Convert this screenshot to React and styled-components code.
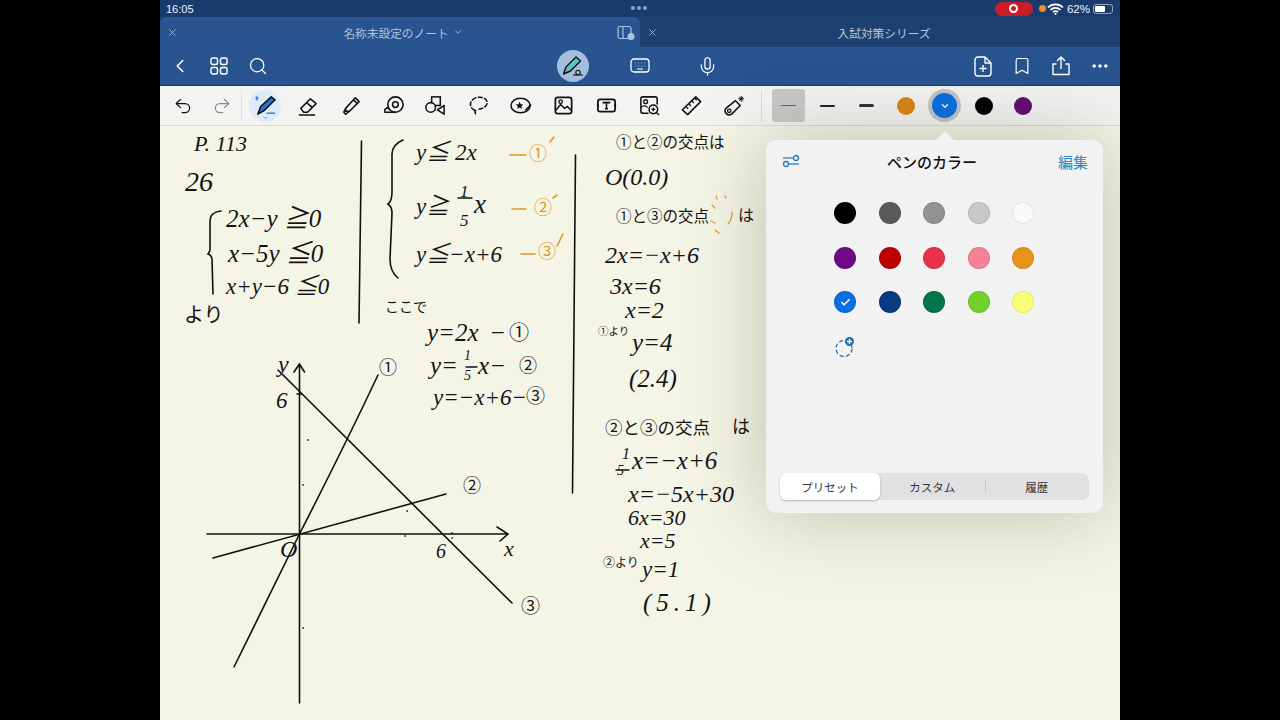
import React from 'react';
import styled, { createGlobalStyle } from 'styled-components';
import { ChevronLeft, Search, Mic, Bookmark, MoreHorizontal, Undo2, Redo2, ChevronDown, X, Check } from 'lucide-react';

const GlobalStyle = createGlobalStyle`
  * { box-sizing: border-box; }
  html, body { margin: 0; padding: 0; background: #000; }
  body { font-family: "Noto Sans CJK JP", "Liberation Sans", sans-serif; }
`;

const INK = [
  { x: 194, y: 133, s: 22, t: 'P. 113' },
  { x: 185, y: 168, s: 28, t: '26' },
  { x: 226, y: 206, s: 25, t: '2x−y ≧0' },
  { x: 228, y: 241, s: 25, t: 'x−5y ≦0' },
  { x: 226, y: 275, s: 23, t: 'x+y−6 ≦0' },
  { x: 184, y: 304, s: 20, t: 'より', jp: true },
  { x: 416, y: 141, s: 23, t: 'y≦ 2x' },
  { x: 416, y: 195, s: 23, t: 'y≧' },
  { x: 460, y: 183, s: 17, t: '1' },
  { x: 460, y: 212, s: 17, t: '5' },
  { x: 474, y: 191, s: 27, t: 'x' },
  { x: 416, y: 243, s: 23, t: 'y≦−x+6' },
  { x: 385, y: 299, s: 14, t: 'ここで', jp: true },
  { x: 427, y: 320, s: 25, t: 'y=2x' },
  { x: 489, y: 320, s: 25, t: '−' },
  { x: 509, y: 322, s: 20, t: '①', jp: true },
  { x: 430, y: 353, s: 25, t: 'y=' },
  { x: 464, y: 349, s: 14, t: '1' },
  { x: 464, y: 369, s: 14, t: '5' },
  { x: 478, y: 353, s: 25, t: 'x−' },
  { x: 519, y: 355, s: 18, t: '②', jp: true },
  { x: 433, y: 386, s: 23, t: 'y=−x+6−' },
  { x: 526, y: 385, s: 19, t: '③', jp: true },
  { x: 616, y: 134, s: 15.5, t: '①と②の交点は', jp: true },
  { x: 605, y: 165, s: 24, t: 'O(0.0)' },
  { x: 616, y: 208, s: 15.5, t: '①と③の交点', jp: true },
  { x: 738, y: 206, s: 16, t: 'は', jp: true },
  { x: 605, y: 243, s: 24, t: '2x=−x+6' },
  { x: 610, y: 274, s: 24, t: '3x=6' },
  { x: 625, y: 298, s: 24, t: 'x=2' },
  { x: 598, y: 326, s: 10.5, t: '①より', jp: true },
  { x: 632, y: 330, s: 25, t: 'y=4' },
  { x: 629, y: 366, s: 25, t: '(2.4)' },
  { x: 605, y: 418, s: 17.5, t: '②と③の交点', jp: true },
  { x: 732, y: 416, s: 18, t: 'は', jp: true },
  { x: 622, y: 446, s: 16, t: '1' },
  { x: 617, y: 464, s: 14, t: '5' },
  { x: 632, y: 448, s: 25, t: 'x=−x+6' },
  { x: 628, y: 482, s: 24, t: 'x=−5x+30' },
  { x: 628, y: 507, s: 22, t: '6x=30' },
  { x: 640, y: 530, s: 22, t: 'x=5' },
  { x: 603, y: 556, s: 12, t: '②より', jp: true },
  { x: 642, y: 558, s: 23, t: 'y=1' },
  { x: 643, y: 590, s: 25, t: '(5.1)', wide: true },
  { x: 379, y: 357, s: 18, t: '①', jp: true },
  { x: 463, y: 475, s: 18, t: '②', jp: true },
  { x: 521, y: 595, s: 19, t: '③', jp: true },
  { x: 278, y: 352, s: 24, t: 'y' },
  { x: 276, y: 389, s: 23, t: '6' },
  { x: 280, y: 537, s: 24, t: 'O' },
  { x: 504, y: 538, s: 22, t: 'x' },
  { x: 436, y: 541, s: 20, t: '6' },
  { x: 529, y: 143, s: 18, t: '①', jp: true, c: '#dd9a1f' },
  { x: 534, y: 197, s: 18, t: '②', jp: true, c: '#dd9a1f' },
  { x: 538, y: 241, s: 18, t: '③', jp: true, c: '#dd9a1f' },
];

const DOTS = [[308, 440], [303, 485], [407, 511], [405, 536], [452, 533], [452, 538], [303, 628]];

const SWATCHES = [
  ['#000000', '#5a5a5a', '#929292', '#c8c8c8', '#fafafa'],
  ['#6e0a86', '#bb0000', '#e8324c', '#f58296', '#e8921c'],
  ['#0a6fe0', '#083a80', '#04744a', '#74d02c', '#faff78'],
];

const TOOLS = [
  <><path d="M4 21l3-8L18 3l4 3-11 11-7 4z" fill="#2d6fd0" stroke="#111" strokeWidth="1.6" strokeLinejoin="round" /><path d="M13 20h9" stroke="#2d6fd0" strokeWidth="1.4" /><path d="M3 2v5M1.500 3.500l3 2M1.500 5.500l3-2" stroke="#2d6fd0" strokeWidth="1" /><path d="M10 24l2 1.500 2-1.500" fill="none" stroke="#6d8fb8" strokeWidth="1" /></>,
  <><path d="M5 15L15 5l6 5-9 9H8z" fill="none" stroke="#111" strokeWidth="1.6" strokeLinejoin="round" /><path d="M11 9l6 5M3 22h17" stroke="#111" strokeWidth="1.6" /></>,
  <><path d="M7 15L17 4l4 4-10 10-4 0zM7 15l-2 4 2 2 4-3M15 6l4 4" fill="none" stroke="#111" strokeWidth="1.6" strokeLinejoin="round" /></>,
  <><circle cx="14" cy="11" r="8" fill="none" stroke="#111" strokeWidth="1.6" /><circle cx="14" cy="11" r="3" fill="none" stroke="#111" strokeWidth="1.6" /><path d="M14 19H3v-3l3-2 1 2" fill="none" stroke="#111" strokeWidth="1.6" strokeLinejoin="round" /></>,
  <><rect x="8" y="3" width="9" height="9" fill="none" stroke="#111" strokeWidth="1.6" /><circle cx="7" cy="14" r="5" fill="#f2f2f2" stroke="#111" strokeWidth="1.6" /><path d="M21 12v9l-7-4.5z" fill="#f2f2f2" stroke="#111" strokeWidth="1.6" strokeLinejoin="round" /></>,
  <><path d="M8 17C2 14 2 7 9 4c6-2 13 1 12 6-1 4-6 6-11 6M9 17c-2 2 0 3 1 5" fill="none" stroke="#111" strokeWidth="1.6" strokeDasharray="4 2.6" strokeLinecap="round" /></>,
  <><ellipse cx="11" cy="12" rx="10" ry="7.500" fill="none" stroke="#111" strokeWidth="1.600" /><path d="M10 8l1.200 2.600 2.800.3-2.100 1.900.6 2.800-2.500-1.400-2.500 1.400.6-2.800L6 10.900l2.800-.3z" fill="#111" /><path d="M16 17l6-6" stroke="#111" strokeWidth="1.600" /></>,
  <><rect x="3.500" y="3.500" width="17" height="17" rx="2.500" fill="none" stroke="#111" strokeWidth="1.800" /><path d="M4 17l5-6 4 4 3-2 4 4" fill="none" stroke="#111" strokeWidth="1.600" /><circle cx="9" cy="8" r="1.800" fill="none" stroke="#111" strokeWidth="1.400" /></>,
  <><rect x="3" y="5.500" width="18" height="13" rx="2.500" fill="none" stroke="#111" strokeWidth="1.800" /><path d="M8 9h8M12 9v6.500M10.500 15.500h3" fill="none" stroke="#111" strokeWidth="1.600" /><path d="M2 12h2M20 12h2" stroke="#111" strokeWidth="2.400" /></>,
  <><path d="M11 20H5a2 2 0 0 1-2-2V5a2 2 0 0 1 2-2h13a2 2 0 0 1 2 2v6" fill="none" stroke="#111" strokeWidth="1.600" /><circle cx="8" cy="8" r="2" fill="none" stroke="#111" strokeWidth="1.400" /><path d="M3 14c2-2 5-2 7 0" fill="none" stroke="#111" strokeWidth="1.400" /><circle cx="16" cy="16" r="4.500" fill="none" stroke="#111" strokeWidth="1.600" /><path d="M14 16h4M16 14v4M19.500 19.500l2.500 2.500" stroke="#111" strokeWidth="1.400" /></>,
  <><path d="M2.500 16.500L16.500 3l5 5L8 21.500z" fill="none" stroke="#111" strokeWidth="1.600" strokeLinejoin="round" /><path d="M6.500 13.500l2 2M9.500 10.500l2 2M12.500 7.500l2 2M15.500 4.500l2 2" stroke="#111" strokeWidth="1.300" /></>,
  <><path d="M3 15L13 7l5 5-9 9c-2 1.500-4 1-5.500-.5S1.500 17 3 15z" fill="none" stroke="#111" strokeWidth="1.600" strokeLinejoin="round" /><circle cx="6.500" cy="17.500" r="1.800" fill="none" stroke="#111" strokeWidth="1.400" /><path d="M19 2v6M16 5h6M17 3l4 4M21 3l-4 4" stroke="#111" strokeWidth="1" /></>,
];

const App = () => (
  <Screen>
    <GlobalStyle />
    <StatusBar>
      <span>16:05</span>
      <StatusDots><i /><i /><i /></StatusDots>
      <StatusRight>
        <RecordPill><RecordDot /></RecordPill>
        <OrangeDot />
        <svg width="17" height="12" viewBox="0 0 17 12"><path d="M1 4.500a10.500 10.500 0 0 1 15 0M3.500 7a7 7 0 0 1 10 0M6 9.200a3.500 3.500 0 0 1 5 0" fill="none" stroke="#fff" strokeWidth="1.700" /><circle cx="8.500" cy="10.800" r="1.100" fill="#fff" /></svg>
        <span>62%</span>
        <Battery><BatteryFill $level={62} /></Battery>
      </StatusRight>
    </StatusBar>

    <TabRow>
      <Tab $active>
        <TabClose><X size={11} /></TabClose>
        <TabTitle $active>名称未設定のノート <ChevronDown size={10} /></TabTitle>
        <SplitIcon width="19" height="16" viewBox="0 0 19 16">
          <rect x="1" y="1.500" width="13" height="12" rx="2" fill="none" stroke="#a9c3e2" strokeWidth="1.200" />
          <path d="M6 1.500v12" stroke="#a9c3e2" strokeWidth="1.200" />
          <circle cx="14" cy="11.500" r="3.500" fill="#a9c3e2" />
        </SplitIcon>
      </Tab>
      <Tab>
        <TabClose><X size={11} /></TabClose>
        <TabTitle>入試対策シリーズ</TabTitle>
      </Tab>
    </TabRow>

    <NavBar>
      <NavGroup>
        <NavButton><ChevronLeft size={22} strokeWidth={1.7} /></NavButton>
        <NavButton>
          <svg width="18" height="18" viewBox="0 0 18 18" fill="none" stroke="#fff" strokeWidth="1.400">
            <rect x="1" y="1" width="6.500" height="6.500" rx="1.800" /><rect x="10.500" y="1" width="6.500" height="6.500" rx="1.800" />
            <rect x="1" y="10.500" width="6.500" height="6.500" rx="1.800" /><rect x="10.500" y="10.500" width="6.500" height="6.500" rx="1.800" />
          </svg>
        </NavButton>
        <NavButton><Search size={20} strokeWidth={1.5} /></NavButton>
      </NavGroup>
      <NavCenter>
        <PenBadge>
          <svg width="22" height="22" viewBox="0 0 22 22">
            <path d="M1.500 19l2.500-7L14 2l4.500 4-10 10z" fill="#58c4c0" stroke="#111" strokeWidth="1.400" strokeLinejoin="round" />
            <path d="M11 20h10" stroke="#111" strokeWidth="1.100" /><circle cx="16" cy="17.500" r="2.200" fill="none" stroke="#111" strokeWidth="1.100" />
          </svg>
        </PenBadge>
        <NavButton>
          <svg width="20" height="18" viewBox="0 0 20 18" fill="none" stroke="#fff" strokeWidth="1.300">
            <rect x="1" y="2" width="18" height="13" rx="3" />
            <path d="M5 6h.5M8 6h.5M11 6h.5M14 6h.5M5 9h.5M8 9h.5M11 9h.5M14 9h.5M7 12h6" strokeWidth="1.200" />
          </svg>
        </NavButton>
        <NavButton><Mic size={21} strokeWidth={1.4} /></NavButton>
      </NavCenter>
      <NavGroup $end>
        <NavButton>
          <svg width="18" height="21" viewBox="0 0 18 21" fill="none" stroke="#fff" strokeWidth="1.400">
            <path d="M11 1H4a3 3 0 0 0-3 3v13a3 3 0 0 0 3 3h10a3 3 0 0 0 3-3V7zM11 1v6h6M9 9v7M5.500 12.500h7" strokeLinejoin="round" />
          </svg>
        </NavButton>
        <NavButton><Bookmark size={20} strokeWidth={1.4} /></NavButton>
        <NavButton>
          <svg width="20" height="20" viewBox="0 0 20 20" fill="none" stroke="#fff" strokeWidth="1.400">
            <path d="M10 13V1.500M6 5l4-4 4 4M5.500 8H2v10.500h16V8h-3.500" strokeLinejoin="round" />
          </svg>
        </NavButton>
        <NavButton><MoreHorizontal size={20} strokeWidth={2.2} /></NavButton>
      </NavGroup>
    </NavBar>

    <ToolBar>
      <UndoGroup>
        <ToolSlot><Undo2 size={20} strokeWidth={1.5} color="#111" /></ToolSlot>
        <ToolSlot><Redo2 size={20} strokeWidth={1.5} color="#8a8a8a" /></ToolSlot>
      </UndoGroup>
      <ToolGroup>
        {TOOLS.map((icon, i) => (
          <ToolSlot key={i} $active={i === 0}>
            <svg width="23" height="23" viewBox="0 0 24 24" overflow="visible">{icon}</svg>
          </ToolSlot>
        ))}
      </ToolGroup>
      <SwatchGroup>
        <LineSlot $active><LineSample $h={1} $c="#666" /></LineSlot>
        <LineSlot><LineSample $h={2} $c="#222" /></LineSlot>
        <LineSlot><LineSample $h={3} $c="#333" /></LineSlot>
        <LineSlot><ToolDot $c="#dc8414" /></LineSlot>
        <LineSlot>
          <ActiveDot><ChevronDown size={10} strokeWidth={3} color="#fff" /></ActiveDot>
        </LineSlot>
        <LineSlot><ToolDot $c="#000" /></LineSlot>
        <LineSlot><ToolDot $c="#640a78" /></LineSlot>
      </SwatchGroup>
    </ToolBar>

    <Canvas>
      {INK.map((n, i) => (
        <Ink key={i} $x={n.x} $y={n.y - 126} $s={n.s} $c={n.c} $jp={n.jp} $wide={n.wide}>{n.t}</Ink>
      ))}
      <Strokes viewBox="0 126 960 594" width="960" height="594">
        <g transform="translate(-160 0)" fill="none" stroke="#111" strokeWidth="1.600" strokeLinecap="round">
          <path d="M361.500 141L359 323" />
          <path d="M575.500 155L572.500 493" />
          <path d="M221 211c-8 1-11 4-11 10l0 28c0 3-1 4-2 5 3 1 4 3 4 6l1 34" />
          <path d="M403 140c-7 3-11 7-11 14l0 38c0 6-1 10-4 12 3 2 4 4 4 9l-2 46c0 8 3 15 8 19" />
          <path d="M299.500 365L299.500 703M294 372l5.500-8 5 8" />
          <path d="M207 534L508 534M497 527l11 7-8 7" />
          <path d="M234 667L300 533Q345 445 378 375" />
          <path d="M213 558L446 494" />
          <path d="M278 370L512 603" />
          <path d="M297 394h5" />
          <path d="M458 198h14M616 470h13M466 367h11" strokeWidth="1.300" />
          {DOTS.map(([x, y]) => <circle key={`${x}-${y}`} cx={x} cy={y} r=".3" strokeWidth="1" />)}
          <g stroke="#dd9a1f">
            <path d="M510 155h16M550 142l4-5M512 209h14M553 198l4-3M521 254h14M557 246l6-12" />
            <path d="M716 196l1 3M725 196l1 2M712 205l3 3M732 212c0 5-1 9-4 12M711 221l4 2M715 230l4 3" strokeWidth="1.200" />
          </g>
        </g>
      </Strokes>

      <Popover>
        <PopoverHead>
          <svg width="18" height="14" viewBox="0 0 18 14" fill="none" stroke="#2a7ab8" strokeWidth="1.300">
            <path d="M1 4h10" /><circle cx="14" cy="4" r="2.500" /><circle cx="4" cy="10" r="2.500" /><path d="M6.500 10H17" />
          </svg>
          <PopoverTitle>ペンのカラー</PopoverTitle>
          <EditLink>編集</EditLink>
        </PopoverHead>
        <Palette>
          {SWATCHES.flat().map((c, i) => (
            <Swatch key={c} $c={c}>{i === 10 && <Check size={11} strokeWidth={3.500} color="#fff" />}</Swatch>
          ))}
          <AddColor>
            <svg width="22" height="22" viewBox="0 0 22 22">
              <circle cx="10" cy="12.500" r="8" fill="none" stroke="#1c72b0" strokeWidth="1.300" strokeDasharray="4 2.500" />
              <circle cx="15.500" cy="5.500" r="4.500" fill="#1c72b0" />
              <path d="M13 5.500h5M15.500 3v5" stroke="#fff" strokeWidth="1.400" />
            </svg>
          </AddColor>
        </Palette>
        <Segments>
          <Segment $selected>プリセット</Segment>
          <Segment>カスタム</Segment>
          <Segment $divided>履歴</Segment>
        </Segments>
      </Popover>
    </Canvas>
  </Screen>
);

const Screen = styled.div`
  width: 960px;
  height: 720px;
  margin: 0 auto;
  overflow: hidden;
  display: flex;
  flex-direction: column;
  background: #f5f5e7;
`;

const StatusBar = styled.div`
  height: 17px;
  flex: none;
  display: flex;
  align-items: center;
  justify-content: space-between;
  padding: 0 7px 0 6px;
  position: relative;
  background: #1c3b6d;
  color: #f2f5fa;
  font: 11px "Liberation Sans", sans-serif;
`;

const StatusDots = styled.div`
  position: absolute;
  left: 471px;
  top: 6px;
  display: flex;
  gap: 2px;
  i {
    width: 4px;
    height: 4px;
    border-radius: 50%;
    background: #8fa6c6;
  }
`;

const StatusRight = styled.div`
  display: flex;
  align-items: center;
  gap: 3px;
  font-size: 11.500px;
`;

const RecordPill = styled.div`
  width: 38px;
  height: 14px;
  border-radius: 7px;
  background: #c81e28;
  display: flex;
  align-items: center;
  justify-content: center;
  margin-right: 3.500px;
`;

const RecordDot = styled.div`
  width: 9px;
  height: 9px;
  border-radius: 50%;
  background: #c81e28;
  border: 2px solid #fff;
`;

const OrangeDot = styled.div`
  width: 7px;
  height: 7px;
  border-radius: 50%;
  background: #e8912c;
  margin-right: -2.500px;
`;

const Battery = styled.div`
  width: 20px;
  height: 10px;
  padding: 1px;
  border: 1px solid #8fa6c6;
  border-radius: 3px;
`;

const BatteryFill = styled.div`
  height: 100%;
  width: ${({ $level }) => $level}%;
  background: #fff;
  border-radius: 1px;
`;

const TabRow = styled.div`
  height: 30px;
  flex: none;
  display: grid;
  grid-template-columns: 1fr 1fr;
  background: #1d3f72;
`;

const Tab = styled.div`
  position: relative;
  display: flex;
  align-items: center;
  justify-content: center;
  background: ${({ $active }) => ($active ? '#28548f' : '#1d3f72')};
  border-radius: ${({ $active }) => ($active ? '6px 6px 0 0' : '0')};
`;

const TabClose = styled.span`
  position: absolute;
  left: 7px;
  top: 10px;
  color: #9db8d8;
  display: flex;
`;

const TabTitle = styled.span`
  display: flex;
  align-items: center;
  gap: 4px;
  font-size: 11.700px;
  color: ${({ $active }) => ($active ? '#aac4e2' : '#b8c8dc')};
  margin-left: ${({ $active }) => ($active ? '6px' : '8px')};
`;

const SplitIcon = styled.svg`
  position: absolute;
  right: 4px;
  top: 8px;
`;

const NavBar = styled.div`
  height: 39px;
  flex: none;
  display: grid;
  grid-template-columns: 1fr auto 1fr;
  align-items: center;
  padding: 0 6px;
  background: #28548f;
  border-bottom: 1px solid #153a6a;
`;

const NavGroup = styled.div`
  display: flex;
  gap: 11px;
  justify-content: ${({ $end }) => ($end ? 'flex-end' : 'flex-start')};
`;

const NavCenter = styled.div`
  display: flex;
  gap: 39px;
  align-items: center;
`;

const NavButton = styled.div`
  width: 28px;
  height: 28px;
  display: flex;
  align-items: center;
  justify-content: center;
  color: #fff;
`;

const PenBadge = styled.div`
  width: 32px;
  height: 32px;
  margin: 0 -2px;
  border-radius: 50%;
  background: #a3bfdc;
  display: flex;
  align-items: center;
  justify-content: center;
`;

const ToolBar = styled.div`
  height: 40px;
  flex: none;
  display: flex;
  align-items: center;
  padding-left: 7px;
  background: #f3f3f2;
  border-bottom: 1px solid #dcdccf;
`;

const UndoGroup = styled.div`
  display: flex;
  gap: 7px;
  padding-right: 3px;
  border-right: 1px solid #e2e2e2;
`;

const ToolGroup = styled.div`
  display: flex;
  gap: 10.700px;
  padding: 0 10px 0 7px;
  border-right: 1px solid #dcdcdc;
`;

const ToolSlot = styled.div`
  width: 32px;
  height: 32px;
  flex: none;
  display: flex;
  align-items: center;
  justify-content: center;
  border-radius: 50%;
  background: ${({ $active }) => ($active ? '#dcebfa' : 'transparent')};
`;

const SwatchGroup = styled.div`
  display: flex;
  gap: 6.200px;
  padding-left: 10px;
  align-items: center;
`;

const LineSlot = styled.div`
  width: 33px;
  height: 33px;
  flex: none;
  display: flex;
  align-items: center;
  justify-content: center;
  border-radius: 3px;
  background: ${({ $active }) => ($active ? '#c8c8c8' : 'transparent')};
`;

const LineSample = styled.div`
  width: 15px;
  height: ${({ $h }) => $h}px;
  border-radius: 2px;
  background: ${({ $c }) => $c};
`;

const ToolDot = styled.div`
  width: 18px;
  height: 18px;
  border-radius: 50%;
  background: ${({ $c }) => $c};
`;

const ActiveDot = styled.div`
  width: 25px;
  height: 25px;
  flex: none;
  border-radius: 50%;
  background: #0a6fe0;
  box-shadow: 0 0 0 4px #c4c4c4;
  display: flex;
  align-items: center;
  justify-content: center;
`;

const Canvas = styled.div`
  position: relative;
  flex: 1;
  background: #f5f5e7;
`;

const Ink = styled.span`
  position: absolute;
  left: ${({ $x }) => $x - 160}px;
  top: ${({ $y }) => $y}px;
  font-family: ${({ $jp }) => ($jp
    ? '"Noto Sans CJK JP", sans-serif'
    : '"Liberation Serif", "Noto Sans CJK JP", serif')};
  font-style: ${({ $jp }) => ($jp ? 'normal' : 'italic')};
  font-size: ${({ $s }) => $s}px;
  letter-spacing: ${({ $wide }) => ($wide ? '5px' : 'normal')};
  line-height: 1;
  white-space: nowrap;
  color: ${({ $c }) => $c || '#141414'};
`;

const Strokes = styled.svg`
  position: absolute;
  left: 0;
  top: 0;
  pointer-events: none;
`;

const Popover = styled.div`
  position: absolute;
  left: 606px;
  top: 14px;
  width: 337px;
  height: 373px;
  display: flex;
  flex-direction: column;
  padding: 0 14px 13px;
  background: #f2f2f3;
  border-radius: 11px;
  box-shadow: 0 0 80px rgba(50, 50, 30, 0.28);
  &::before {
    content: '';
    position: absolute;
    left: 172px;
    top: -6px;
    width: 14px;
    height: 14px;
    border-radius: 3px;
    background: #f2f2f3;
    transform: rotate(45deg);
  }
`;

const PopoverHead = styled.div`
  height: 42px;
  flex: none;
  position: relative;
  display: flex;
  align-items: center;
  justify-content: space-between;
  padding: 0 1px 0 2px;
`;

const PopoverTitle = styled.span`
  font-size: 15px;
  font-weight: 500;
  color: #111;
  margin-left: 6px;
`;

const EditLink = styled.span`
  font-size: 15px;
  color: #2a86c0;
`;

const Palette = styled.div`
  flex: 1;
  display: grid;
  grid-template-columns: repeat(5, 22px);
  grid-auto-rows: 22px;
  column-gap: 22.500px;
  row-gap: 22.500px;
  padding: 20px 0 0 54px;
`;

const Swatch = styled.div`
  width: 22px;
  height: 22px;
  border-radius: 50%;
  display: flex;
  align-items: center;
  justify-content: center;
  background: ${({ $c }) => $c};
  border: 1px solid rgba(0, 0, 0, 0.08);
`;

const AddColor = styled.div`
  width: 22px;
  height: 22px;
  display: flex;
`;

const Segments = styled.div`
  height: 27px;
  flex: none;
  display: grid;
  grid-template-columns: 100px 1fr 1fr;
  border-radius: 7px;
  background: #e1e1e3;
`;

const Segment = styled.div`
  display: flex;
  align-items: center;
  justify-content: center;
  position: relative;
  font-size: 11.500px;
  color: #333;
  border-radius: 6px;
  background: ${({ $selected }) => ($selected ? '#fff' : 'transparent')};
  box-shadow: ${({ $selected }) => ($selected ? '0 1px 2px rgba(0,0,0,.25)' : 'none')};
  ${({ $divided }) => $divided && `
    &::before {
      content: '';
      position: absolute;
      left: 0;
      top: 7px;
      bottom: 7px;
      width: 1px;
      background: #c8c8ca;
    }
  `}
`;

export default App;
